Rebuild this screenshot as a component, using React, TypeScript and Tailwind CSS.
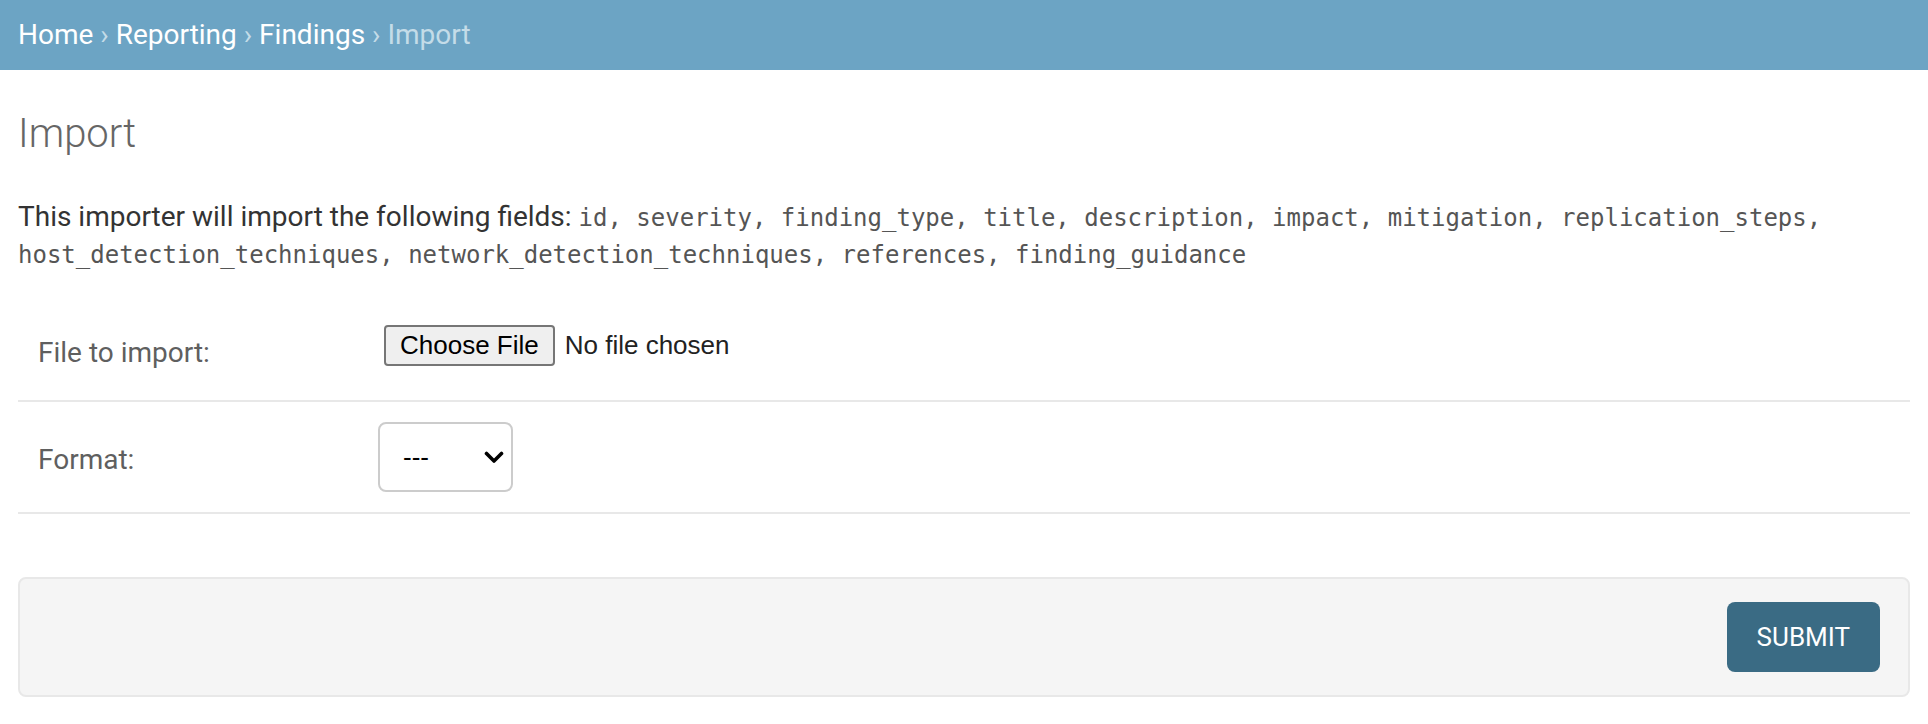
import React from 'react';

const FIELDS = [
  'id',
  'severity',
  'finding_type',
  'title',
  'description',
  'impact',
  'mitigation',
  'replication_steps',
  'host_detection_techniques',
  'network_detection_techniques',
  'references',
  'finding_guidance',
];

export default function App() {
  return (
    <div className="min-h-screen bg-white font-['Roboto',sans-serif] text-[#333]">
      {/* breadcrumbs */}
      <nav className="flex h-[70px] items-center bg-[#6ca4c4] px-[18px] text-[28px] text-white">
        <a href="#">Home</a>
        <span className="text-[#c4dce8]">&nbsp;›&nbsp;</span>
        <a href="#">Reporting</a>
        <span className="text-[#c4dce8]">&nbsp;›&nbsp;</span>
        <a href="#">Findings</a>
        <span className="text-[#c4dce8]">&nbsp;›&nbsp;Import</span>
      </nav>

      <main className="px-[18px]">
        <h1 className="mt-[40px] text-[40px] font-light leading-[48px] text-[#666]">Import</h1>

        <p className="mt-[40px] text-[28px] leading-[37px] text-[#333]">
          This importer will import the following fields:{' '}
          <code className="font-['DejaVu_Sans_Mono',monospace] text-[24px] leading-[28px] text-[#555]">
            {FIELDS.join(', ')}
          </code>
        </p>

        <form className="mt-[18px]" onSubmit={(e) => e.preventDefault()}>
          <div className="flex h-[112px] items-center border-b-2 border-[#e8e8e8] px-[20px]">
            <label className="w-[346px] shrink-0 pt-[16px] text-[28px] text-[#5f5f5f]">File to import:</label>
            <div className="flex items-center font-['Liberation_Sans',Arial,sans-serif] text-[26px]">
              <span className="flex h-[41px] items-center rounded-[4px] border-2 border-[#767676] bg-[#efefef] px-[14px] text-black">
                Choose File
              </span>
              <span className="ml-[10px] text-[#222]">No file chosen</span>
            </div>
          </div>

          <div className="flex h-[112px] items-center border-b-2 border-[#e8e8e8] px-[20px]">
            <label className="w-[340px] shrink-0 pt-[5px] text-[28px] text-[#5f5f5f]">Format:</label>
            <div className="flex h-[70px] w-[135px] items-center justify-between rounded-[8px] border-2 border-[#cccccc] bg-white pl-[23px] pr-[7px] font-['Liberation_Sans',Arial,sans-serif] text-[26px] text-black">
              <span>---</span>
              <svg width="20" height="13" viewBox="0 0 20 13" fill="none">
                <path d="M2.5 2.5 L10 10 L17.5 2.5" stroke="#000" strokeWidth="3.6" strokeLinecap="round" strokeLinejoin="round" />
              </svg>
            </div>
          </div>

          <div className="mt-[63px] flex justify-end rounded-[8px] border-2 border-[#e8e8e8] bg-[#f5f5f5] py-[23px] pr-[28px]">
            <button
              type="submit"
              className="h-[70px] rounded-[8px] bg-[#3a6b84] px-[30px] text-[26px] uppercase text-white"
            >
              Submit
            </button>
          </div>
        </form>
      </main>
    </div>
  );
}
